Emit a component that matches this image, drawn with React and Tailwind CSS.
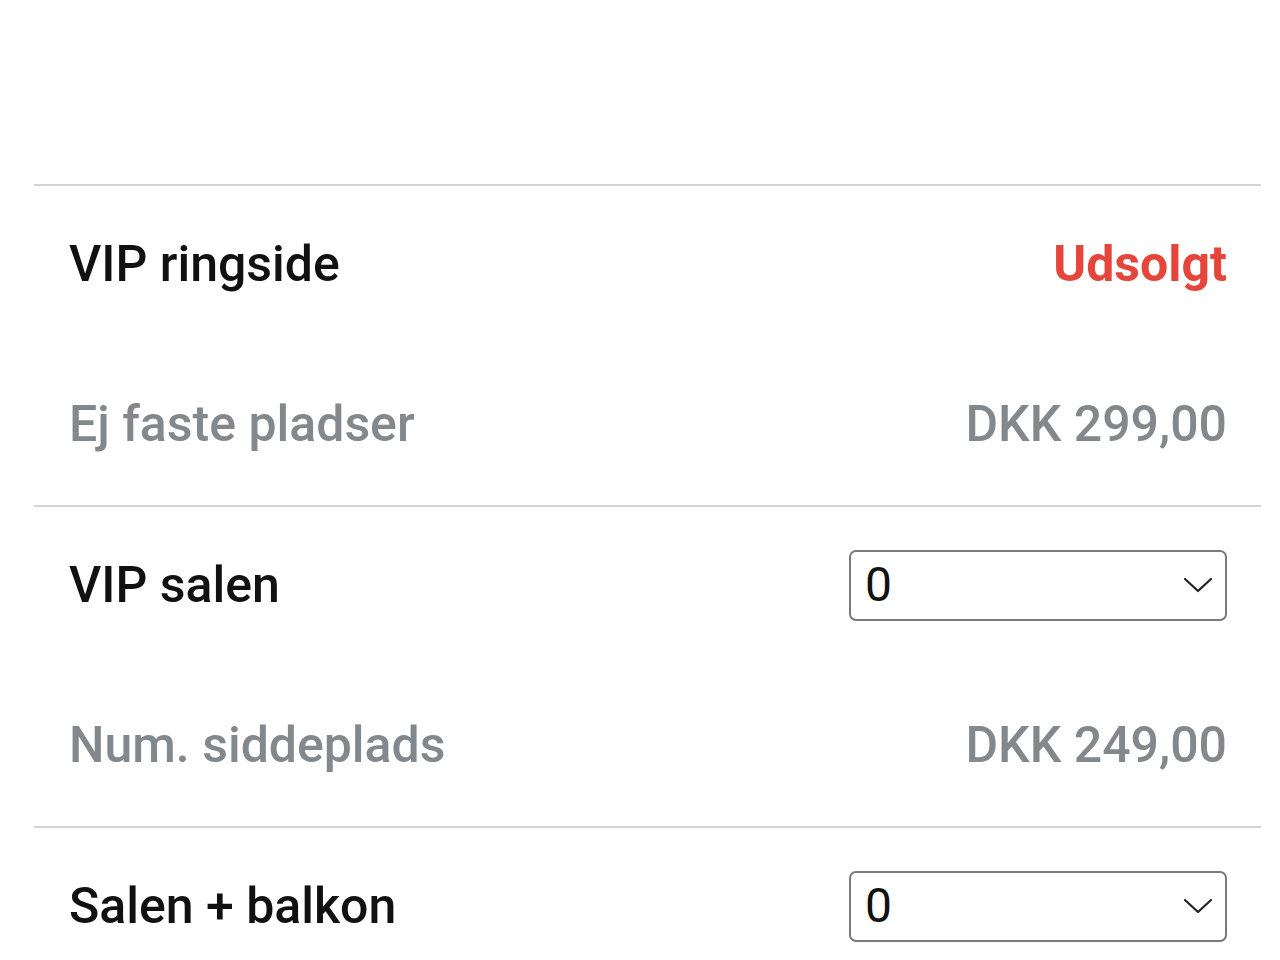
import React from "react";

function Chevron() {
  return (
    <svg width="30" height="18" viewBox="0 0 30 18" fill="none">
      <path d="M2 3 L15 15 L28 3" stroke="#222" strokeWidth="2.2" strokeLinecap="round" strokeLinejoin="round" />
    </svg>
  );
}

function Select() {
  return (
    <div className="flex h-[71px] w-[378px] items-center justify-between rounded-[7px] border-2 border-[#7a7a7a] bg-white pl-[14px] pr-[12px]">
      <span className="text-[48px] font-normal leading-none text-[#111]">0</span>
      <Chevron />
    </div>
  );
}

function Row({ title, right, sub, price }) {
  return (
    <div className="border-t-2 border-[#d4d4d4]">
      <div className="flex h-[156px] items-center justify-between pl-[35px] pr-[34px]">
        <span className="text-[50px] font-medium leading-none text-[#111]">{title}</span>
        {right}
      </div>
      <div className="flex h-[163px] items-center justify-between pl-[35px] pr-[34px]">
        <span className="text-[50px] font-medium leading-none text-[#83888c]">{sub}</span>
        <span className="text-[50px] font-medium leading-none text-[#83888c]">{price}</span>
      </div>
    </div>
  );
}

export default function App() {
  return (
    <div className="h-[960px] w-[1280px] overflow-hidden bg-white" style={{ fontFamily: "Roboto, 'Liberation Sans', sans-serif" }}>
      <div className="h-[184px]" />
      <div className="ml-[34px] w-[1227px]">
        <Row
          title="VIP ringside"
          right={<span className="text-[50px] font-bold leading-none text-[#e5453b]">Udsolgt</span>}
          sub="Ej faste pladser"
          price="DKK 299,00"
        />
        <Row title="VIP salen" right={<Select />} sub="Num. siddeplads" price="DKK 249,00" />
        <Row title="Salen + balkon" right={<Select />} sub="" price="" />
      </div>
    </div>
  );
}
